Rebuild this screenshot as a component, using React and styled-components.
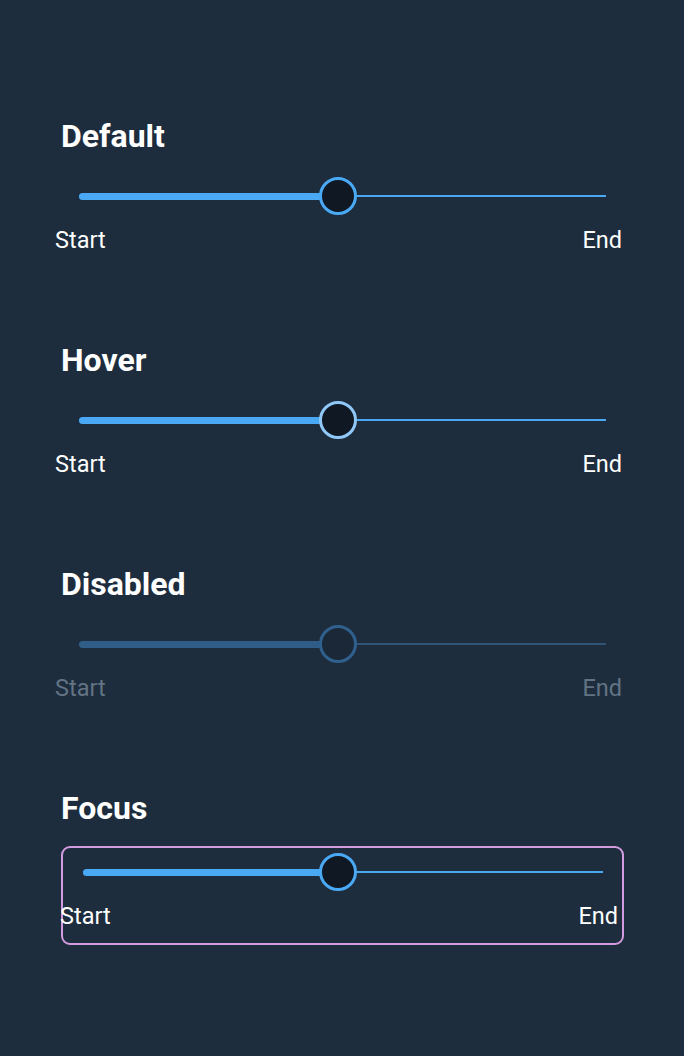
import React from 'react'
import styled, { createGlobalStyle, css } from 'styled-components'

const GlobalStyle = createGlobalStyle`
  html, body {
    margin: 0;
    padding: 0;
    background: #1e2d3d;
  }
  body {
    font-family: Roboto, "Liberation Sans", sans-serif;
    color: #ffffff;
  }
`

const Page = styled.div`
  min-height: 1056px;
  box-sizing: border-box;
  padding: 116px 0 0 61px;
  display: flex;
  flex-direction: column;
`

const Section = styled.section`
  display: flex;
  flex-direction: column;
  height: 224px;
`

const Title = styled.h2`
  margin: 0;
  font-size: 32px;
  line-height: 40px;
  font-weight: 700;
  color: #ffffff;
`

const SliderBlock = styled.div`
  margin-top: 21px;
  display: flex;
  flex-direction: column;
  ${({ focused }) => focused ? css`
    margin-top: 18px;
    margin-left: 0;
    width: 563px;
    box-sizing: border-box;
    border: 2px solid #d29be0;
    border-radius: 9px;
    padding: 5px 0 13px;
  ` : css`
    margin-left: -6px;
    width: 567px;
  `}
`

const Track = styled.div`
  position: relative;
  height: 38px;
  margin: ${({ focused }) => focused ? '0 19px 0 20px' : '0 16px 0 24px'};
`

const Rail = styled.div`
  position: absolute;
  left: 0;
  right: 0;
  top: 18px;
  height: 2px;
  background: ${({ disabled }) => disabled ? '#2f5478' : '#4aa7f2'};
`

const Fill = styled.div`
  position: absolute;
  left: 0;
  top: 15.5px;
  height: 7px;
  border-radius: 4px;
  width: ${({ value }) => value}%;
  background: ${({ disabled }) => disabled ? '#2f5d87' : '#4aa9f5'};
`

const Thumb = styled.div`
  position: absolute;
  top: 0;
  left: calc(${({ value }) => value}% - 19px);
  width: 38px;
  height: 38px;
  box-sizing: border-box;
  border-radius: 50%;
  background: ${({ disabled }) => disabled ? '#1a2838' : '#0f1823'};
  border: 3.5px solid ${({ variant }) =>
    variant === 'hover' ? '#8fc7f7' : variant === 'disabled' ? '#2f608e' : '#4aa9f5'};
`

const Labels = styled.div`
  margin: ${({ focused }) => focused ? '11px 4px 0 -3px' : '11px 0 0'};
  display: flex;
  justify-content: space-between;
  font-size: 23.5px;
  line-height: 28px;
  color: ${({ disabled }) => disabled ? '#627384' : '#ffffff'};
`

const VALUE = 49.1

function Slider ({ variant }) {
  const disabled = variant === 'disabled'
  const focused = variant === 'focus'
  return (
    <SliderBlock focused={focused}>
      <Track focused={focused}>
        <Rail disabled={disabled} />
        <Fill value={VALUE} disabled={disabled} />
        <Thumb value={VALUE} variant={variant} disabled={disabled} />
      </Track>
      <Labels focused={focused} disabled={disabled}>
        <span>Start</span>
        <span>End</span>
      </Labels>
    </SliderBlock>
  )
}

const sections = [
  { title: 'Default', variant: 'default' },
  { title: 'Hover', variant: 'hover' },
  { title: 'Disabled', variant: 'disabled' },
  { title: 'Focus', variant: 'focus' }
]

export default function App () {
  return (
    <>
      <GlobalStyle />
      <Page>
        {sections.map(s => (
          <Section key={s.variant}>
            <Title>{s.title}</Title>
            <Slider variant={s.variant} />
          </Section>
        ))}
      </Page>
    </>
  )
}
